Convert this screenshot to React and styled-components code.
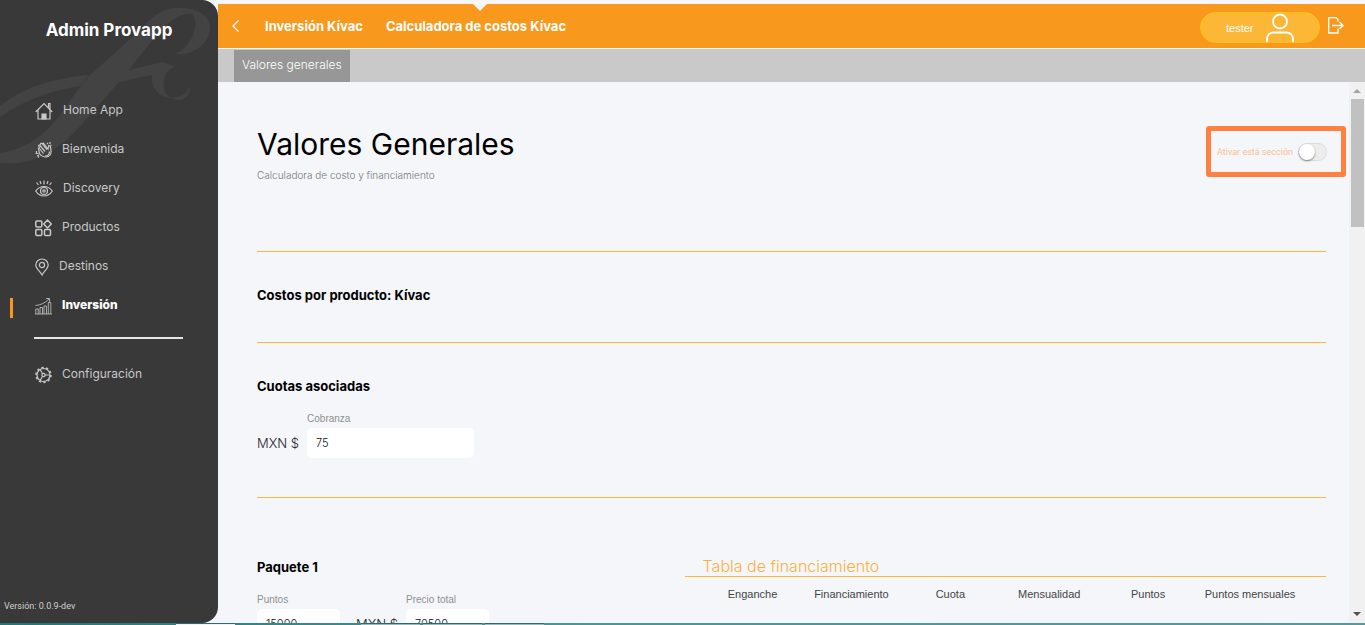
import styled, { createGlobalStyle } from "styled-components"

const GlobalStyle = createGlobalStyle`
  * { box-sizing: border-box; }
  body { margin: 0; background: #f4f6fa; font-family: Inter, "Open Sans", sans-serif; }
  h1, h2, h3, p, ul { margin: 0; padding: 0; }
  button, input { font-family: inherit; }
`

const Screen = styled.div`
  display: flex;
  flex-direction: column;
  height: 100vh;
  overflow: hidden;
`
const Body = styled.div`
  display: flex;
  flex: 1;
  min-height: 0;
`
const Sidebar = styled.aside`
  position: relative;
  display: flex;
  flex-direction: column;
  width: 218px;
  flex-shrink: 0;
  background: #393939;
  border-radius: 0 16px 16px 0;
  overflow: hidden;
`
const Flourish = styled.svg`
  position: absolute;
  left: 0;
  top: 0;
`
const Brand = styled.div`
  position: relative;
  padding-top: 20px;
  height: 91px;
  line-height: 20px;
  text-align: center;
  font-size: 17px;
  font-weight: 700;
  color: #fff;
`
const Menu = styled.ul`
  position: relative;
  list-style: none;
`
const MenuItem = styled.li`
  display: flex;
  align-items: center;
  height: 39px;
  padding-left: 10px;
`
const Marker = styled.span`
  width: 3px;
  height: 20px;
  margin: 4px 22px 0 0;
  background: ${(props) => (props.$on ? "#f8981d" : "transparent")};
`
const MenuLink = styled.a`
  display: flex;
  align-items: center;
  gap: 10px;
  font-size: 12px;
  font-weight: ${(props) => (props.$on ? 800 : 400)};
  color: ${(props) => (props.$on ? "#fff" : "#c8c8c8")};
  text-decoration: none;

  svg {
    color: #c8c8c8;
  }
`
const MenuLabel = styled.span`
  padding-bottom: 2px;
`
const Separator = styled.hr`
  width: 149px;
  height: 2px;
  margin: 12px 0 16px 34px;
  border: 0;
  background: #e6e6e6;
`
const Version = styled.p`
  margin-top: auto;
  padding: 0 4px 9px;
  font: 9px/16px Roboto, sans-serif;
  color: #d0d0d0;
`
const Main = styled.main`
  display: flex;
  flex-direction: column;
  flex: 1;
  min-width: 0;
`
const TopBar = styled.header`
  position: relative;
  display: flex;
  align-items: center;
  height: 44px;
  margin-top: 4px;
  padding: 0 20px 0 12px;
  background: #f8981d;
`
const Notch = styled.span`
  position: absolute;
  left: 255px;
  top: 0;
  border: 7px solid transparent;
  border-top-color: #f4f6fa;
  border-bottom: 0;
`
const IconButton = styled.button`
  display: flex;
  padding: 0;
  border: 0;
  background: none;
  color: #fff;
  cursor: pointer;
`
const Crumbs = styled.nav`
  display: flex;
  gap: 23px;
  flex: 1;
  margin-left: 23px;
`
const Crumb = styled.a`
  font-size: 13px;
  font-weight: 700;
  color: #fff;
  text-decoration: none;
`
const UserButton = styled.button`
  display: flex;
  align-items: center;
  justify-content: space-between;
  width: 120px;
  height: 31px;
  margin: 2px 7px 0 0;
  padding: 1px 25px 0;
  border: 1px solid #fdc60a;
  border-radius: 16px;
  background: #fdb736;
  font: 11px "Liberation Sans", sans-serif;
  color: #fff;
`
const TabBar = styled.nav`
  display: flex;
  height: 33px;
  margin-top: 1px;
  padding: 1px 16px 0;
  background: #c9c9c9;
`
const Tab = styled.a`
  padding: 0 8px;
  background: #979797;
  font-size: 12px;
  font-weight: 300;
  line-height: 30px;
  color: #fff;
  text-decoration: none;
`
const Scroller = styled.div`
  display: flex;
  flex: 1;
  min-height: 0;
`
const Content = styled.div`
  flex: 1;
  min-width: 0;
  padding: 44px 23px 0 39px;
  overflow: hidden;
`
const Track = styled.div`
  display: flex;
  flex-direction: column;
  align-items: center;
  width: 16px;
  padding: 7px 0;
  background: #f1f1f1;
`
const Arrow = styled.span`
  border: 4px solid transparent;
  border-${(props) => (props.$up ? "bottom" : "top")}-color: ${(props) => (props.$up ? "#a3a3a3" : "#505050")};
  border-${(props) => (props.$up ? "top" : "bottom")}: 0;
`
const Thumb = styled.span`
  width: 13px;
  height: 128px;
  margin: 6px 0 auto;
  background: #c1c1c1;
`
const PageHead = styled.section`
  display: flex;
  justify-content: space-between;
  align-items: flex-start;
  height: 126px;
  border-bottom: 1px solid #fbb93a;
`
const Title = styled.h1`
  font-size: 30px;
  font-weight: 400;
  line-height: 36px;
  color: #000;
`
const Lead = styled.p`
  margin-top: 5px;
  font-size: 10px;
  font-weight: 300;
  line-height: 16px;
  color: #777;
`
const SwitchBox = styled.label`
  display: flex;
  align-items: center;
  gap: 5px;
  width: 140px;
  height: 51px;
  margin-right: -20px;
  padding-left: 6px;
  border: 5px solid #ff8142;
  border-radius: 3px;
  font: 9px Roboto, sans-serif;
  color: #fbbf92;
`
const Switch = styled.input`
  appearance: none;
  display: flex;
  align-items: center;
  width: 29px;
  height: 18px;
  margin: 0;
  border: 1px solid #dcdcdc;
  border-radius: 9px;
  background: #ededed;

  &::before {
    content: "";
    width: 16px;
    height: 16px;
    border-radius: 50%;
    background: #fff;
    box-shadow: 0 1px 2px rgba(0, 0, 0, 0.45);
  }
`
const Heading = styled.h2`
  font-size: 13px;
  font-weight: 700;
  line-height: 18px;
  color: #000;
`
const Section = styled.section`
  height: ${(props) => props.$height}px;
  padding-top: 34px;
  border-bottom: 1px solid #fbb93a;
`
const FieldRow = styled.div`
  display: flex;
  align-items: flex-end;
  gap: 8px;
  margin-top: 16px;
`
const PackageRow = styled(FieldRow)`
  label:first-child {
    margin-right: 8px;
  }
`
const Currency = styled.span`
  font-size: 13px;
  font-weight: 300;
  line-height: 30px;
  color: #222;
`
const Field = styled.label`
  display: flex;
  flex-direction: column;
  font: 10px/16px "Liberation Sans", sans-serif;
  color: #909090;
`
const TextInput = styled.input`
  width: ${(props) => props.$width}px;
  height: 30px;
  margin-top: 1px;
  padding: 0 9px;
  border: 0;
  border-radius: 5px;
  background: #fff;
  font-family: Inter, sans-serif;
  font-size: 11px;
  font-weight: 300;
  color: #111;
`
const Package = styled.section`
  display: grid;
  grid-template-columns: 2fr 3fr;
  padding-top: 60px;
`
const TableBox = styled.div`
  display: flex;
  flex-direction: column;
`
const TableTitle = styled.h3`
  height: 19px;
  padding-left: 18px;
  border-bottom: 1px solid #fbb93a;
  font-size: 16px;
  font-weight: 300;
  line-height: 17px;
  color: #fbb13c;
`
const Table = styled.table`
  width: 100%;
  padding: 7px 22px 0 20px;
  border-spacing: 0;
`
const Th = styled.th`
  padding: 0;
  font: 11px/20px "Liberation Sans", sans-serif;
  text-align: center;
  color: #444;
`
const BottomStrip = styled.footer`
  display: flex;
  gap: 3px;
  height: 2px;
  flex-shrink: 0;
  padding-left: 176px;
  background: linear-gradient(90deg, #227678, #4a9498 40%, #56999d);
`
const StripTab = styled.span`
  width: 59px;
  border-top: 1px solid #2b6a6e;
  background: ${(props) => (props.$active ? "#eef4f6" : "#92bcc0")};
  margin-right: ${(props) => (props.$active ? 123 : 0)}px;
`

function Icon({ children, width = 18 }) {
  return (
    <svg width={width} height="18" viewBox={`0 0 ${width} 18`} fill="none" stroke="currentColor" strokeWidth="1.2">
      {children}
    </svg>
  )
}

const home = (
  <Icon>
    <path d="M.7 10 9 1.500 17.300 10M3 8v9h12V8M13.500 6V1.500h1.500v6" />
    <path d="M7 17v-5h4v5z" fill="currentColor" />
  </Icon>
)
const clap = (
  <Icon width={17}>
    <path d="m4.500 12.500-1-5 1-.7-1-2.300 1.500-.7 1-1.500 1.500.5 1-.8L13 8l.8-3.500 1.500.5.8 5.500c0 3-2 5.500-5 5.500-2.500 0-5-1-6.600-3.500z" />
    <path d="m5 4.500 5 6M7.500 3l4.500 5.500M4.500 7.500l4 5M10 15c3 0 4.500-2 4.500-4.500M1.500 10v2M.5 12.500h3M2 15l2-1M3 16.500l1-1M13 2l-1 1M15 1v2M16.500 4l-1 .5" />
  </Icon>
)
const eye = (
  <Icon>
    <path d="M.7 11C3 7.800 5.700 6.500 9 6.500s6 1.300 8.300 4.500C15 14.500 12.300 16 9 16S3 14.500.7 11zM9 .5v4M1.500 2.500l2 2.500M16.500 2.500l-2 2.500M5 1l1 3M13 1l-1 3" />
    <circle cx="9" cy="11" r="3.500" />
    <circle cx="9" cy="11" r="1.200" />
  </Icon>
)
const products = (
  <Icon width={17}>
    <rect x=".8" y="2" width="6" height="6" rx="1" strokeWidth="1.500" />
    <rect x=".8" y="10.500" width="6" height="6" rx="1" strokeWidth="1.500" />
    <rect x="9.500" y="10.500" width="6" height="6" rx="1" strokeWidth="1.500" />
    <path d="m12.500 1 3.800 4-3.800 4-3.800-4z" strokeLinejoin="round" strokeWidth="1.500" />
  </Icon>
)
const pin = (
  <Icon width={14}>
    <path d="M7 17C5.500 14 .8 10.500.8 7a6.200 6 0 0 1 12.400 0c0 3.500-4.700 7-6.200 10z" />
    <circle cx="7" cy="7" r="2.600" />
  </Icon>
)
const chart = (
  <Icon width={17}>
    <path d="M.8 17v-5h2.500v5M5 17v-6.500h2.500V17M9 17V9h2.500v8M13.300 17V5.500h2.500V17M0 17h17M.5 8.500C6 8 10 6 14 2M11 1.500h3.500V5" strokeWidth=".8" />
  </Icon>
)
const gear = (
  <Icon width={17}>
    <circle cx="8.500" cy="9" r="6.500" />
    <circle cx="8.500" cy="9" r="7.500" strokeWidth="1.500" strokeDasharray="2.400 2.310" />
    <circle cx="8.500" cy="9" r="1.600" />
    <path d="M10 9h5M7.500 7.500 5 3.500M7.500 10.500 5 14.500" />
  </Icon>
)

const items = [
  { label: "Home App", icon: home },
  { label: "Bienvenida", icon: clap },
  { label: "Discovery", icon: eye },
  { label: "Productos", icon: products },
  { label: "Destinos", icon: pin },
  { label: "Inversión", icon: chart, on: true },
]

const columns = [
  ["Enganche", "16%"],
  ["Financiamiento", "17%"],
  ["Cuota", "16%"],
  ["Mensualidad", "17%"],
  ["Puntos", "16%"],
  ["Puntos mensuales", "18%"],
]

function MenuEntry({ item }) {
  return (
    <MenuItem>
      <Marker $on={item.on} />
      <MenuLink href="#" $on={item.on}>
        {item.icon}
        <MenuLabel>{item.label}</MenuLabel>
      </MenuLink>
    </MenuItem>
  )
}

function SideNav() {
  return (
    <Sidebar>
      <Flourish width="218" height="170" viewBox="0 0 218 170" fill="#434343">
        <path d="M0 163C35 166 58 151 82 124L120 81L155 37C166 23 180 12 193 14C200 27 190 48 175 54C194 56 210 43 210 27C209 12 192 7 175 8C160 9 148 20 139 31L88 77C72 96 62 115 48 129C32 144 15 151 0 153Z" />
        <path d="M0 106C25 86 56 78 89 75L80 86C50 91 24 100 0 117Z" />
        <path d="M126 71L162 62L176 67C166 69 163 78 164 87C165 94 169 98 173 99C159 97 150 88 152 75L119 82Z" />
        <path d="M171 97C181 98 188 94 189 86C192 94 184 101 177 100Z" />
      </Flourish>
      <Brand>Admin Provapp</Brand>
      <Menu>
        {items.map((item) => (
          <MenuEntry key={item.label} item={item} />
        ))}
      </Menu>
      <Separator />
      <Menu>
        <MenuEntry item={{ label: "Configuración", icon: gear }} />
      </Menu>
      <Version>Versión: 0.0.9-dev</Version>
    </Sidebar>
  )
}

function Header() {
  return (
    <TopBar>
      <Notch />
      <IconButton aria-label="Volver">
        <svg width="12" height="14" viewBox="0 0 12 14" fill="none" stroke="currentColor" strokeWidth="1.200">
          <path d="M8.500 1.500 3 7l5.500 5.500" />
        </svg>
      </IconButton>
      <Crumbs>
        <Crumb href="#">Inversión Kívac</Crumb>
        <Crumb href="#">Calculadora de costos Kívac</Crumb>
      </Crumbs>
      <UserButton>
        tester
        <svg width="28" height="30" viewBox="0 0 28 30" fill="none" stroke="currentColor" strokeWidth="1.800">
          <circle cx="14" cy="8.500" r="7" />
          <path d="M1 29v-3c0-4 3-6.500 6.500-6.500h13c3.500 0 6.500 2.500 6.500 6.500v3" />
        </svg>
      </UserButton>
      <IconButton aria-label="Salir">
        <svg width="18" height="18" viewBox="0 0 18 18" fill="none" stroke="currentColor" strokeWidth="1.300">
          <path d="M11 4.500V2.500L9 .7H1.700V16H11v-4.500M5 8.500h11M12.500 5 16 8.500 12.500 12" />
        </svg>
      </IconButton>
    </TopBar>
  )
}

function App() {
  return (
    <>
      <GlobalStyle />
      <Screen>
        <Body>
          <SideNav />
          <Main>
            <Header />
            <TabBar>
              <Tab href="#">Valores generales</Tab>
            </TabBar>
            <Scroller>
              <Content>
                <PageHead>
                  <div>
                    <Title>Valores Generales</Title>
                    <Lead>Calculadora de costo y financiamiento</Lead>
                  </div>
                  <SwitchBox>
                    Ativar está sección
                    <Switch type="checkbox" />
                  </SwitchBox>
                </PageHead>
                <Section $height={91}>
                  <Heading>Costos por producto: Kívac</Heading>
                </Section>
                <Section $height={155}>
                  <Heading>Cuotas asociadas</Heading>
                  <FieldRow>
                    <Currency>MXN $</Currency>
                    <Field>
                      Cobranza
                      <TextInput $width={167} defaultValue="75" />
                    </Field>
                  </FieldRow>
                </Section>
                <Package>
                  <div>
                    <Heading>Paquete 1</Heading>
                    <PackageRow>
                      <Field>
                        Puntos
                        <TextInput $width={83} defaultValue="15000" />
                      </Field>
                      <Currency>MXN $</Currency>
                      <Field>
                        Precio total
                        <TextInput $width={83} defaultValue="70500" />
                      </Field>
                    </PackageRow>
                  </div>
                  <TableBox>
                    <TableTitle>Tabla de financiamiento</TableTitle>
                    <Table>
                      <thead>
                        <tr>
                          {columns.map(([name, width]) => (
                            <Th key={name} width={width}>{name}</Th>
                          ))}
                        </tr>
                      </thead>
                    </Table>
                  </TableBox>
                </Package>
              </Content>
              <Track>
                <Arrow $up />
                <Thumb />
                <Arrow />
              </Track>
            </Scroller>
          </Main>
        </Body>
        <BottomStrip>
          <StripTab $active />
          <StripTab />
          <StripTab />
          <StripTab />
        </BottomStrip>
      </Screen>
    </>
  )
}

export default App
